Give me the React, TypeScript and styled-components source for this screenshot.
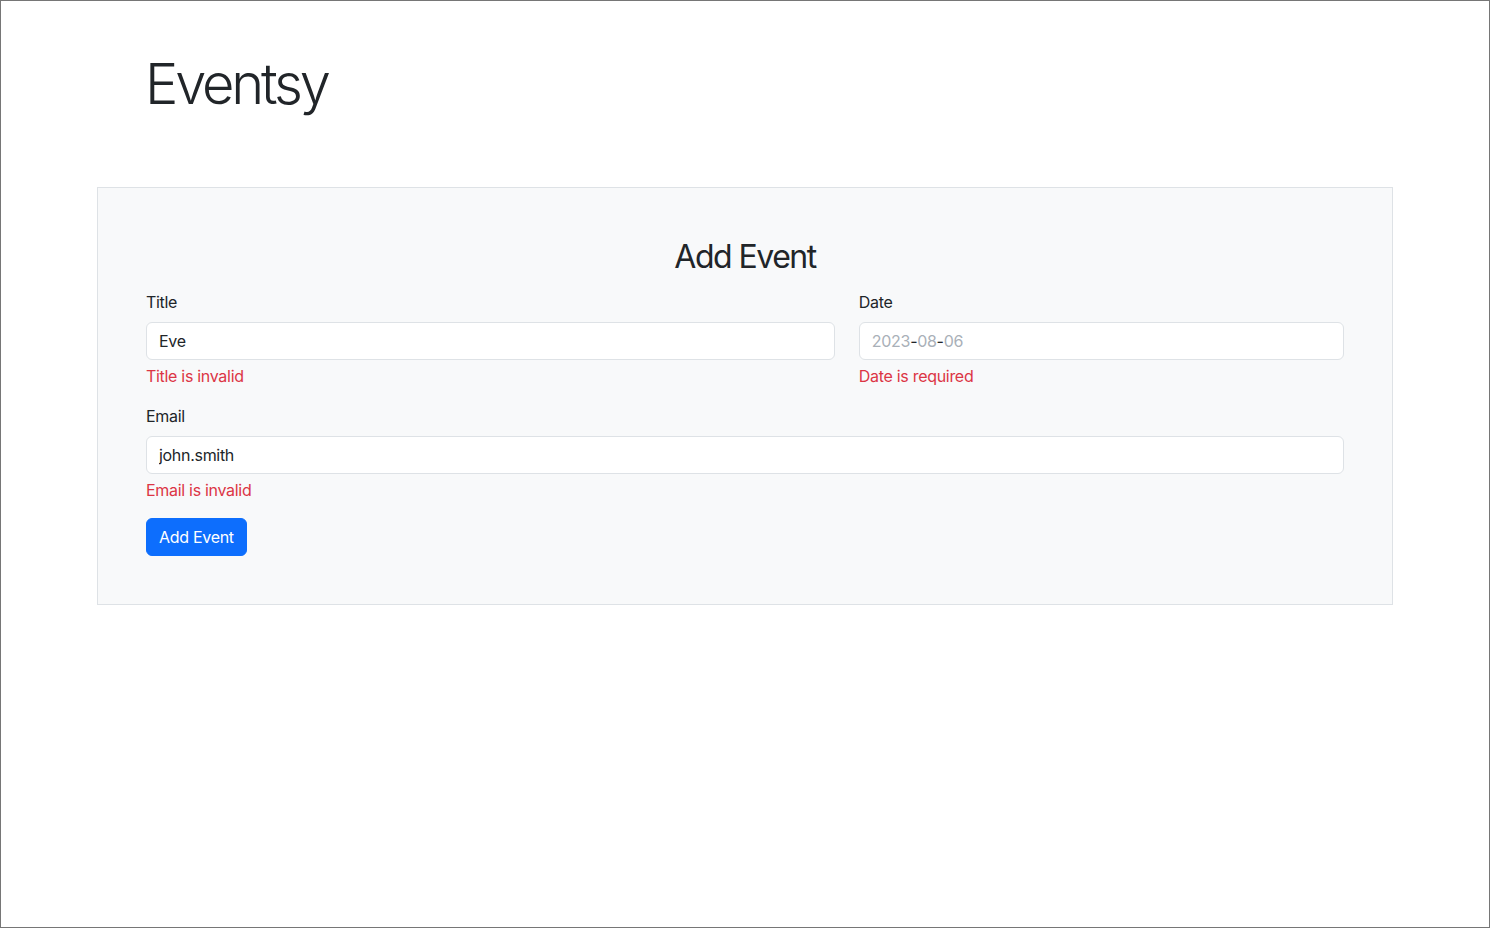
import React from 'react';
import styled, { createGlobalStyle } from 'styled-components';

const GlobalStyle = createGlobalStyle`
  * {
    box-sizing: border-box;
  }
  body {
    margin: 0;
    font-family: Inter, "Noto Sans", "Liberation Sans", sans-serif;
    font-size: 16px;
    line-height: 1.5;
    letter-spacing: -0.3px;
    color: #212529;
    background: #fff;
  }
`;

const Frame = styled.div`
  min-height: 100vh;
  border: 1px solid #767676;
`;

const Container = styled.div`
  max-width: 1320px;
  margin: 0 auto;
  padding: 0 12px;
`;

const Header = styled.header`
  padding: 50px 48px 61px;
`;

const Brand = styled.h1`
  margin: 0 0 8px;
  font-size: 56px;
  font-weight: 300;
  line-height: 1.2;
  letter-spacing: -3.2px;
`;

const Card = styled.form`
  background: #f8f9fa;
  border: 1px solid #dee2e6;
  padding: 48px;
`;

const CardTitle = styled.h2`
  margin: 0 0 13px;
  padding-top: 2px;
  text-align: center;
  font-size: 32px;
  font-weight: 400;
  line-height: 1.2;
  letter-spacing: -1.5px;
`;

const Row = styled.div`
  display: flex;
  margin: 0 -12px;
`;

const Col = styled.div<{ span: number }>`
  flex: 0 0 ${({ span }) => (span / 12) * 100}%;
  max-width: ${({ span }) => (span / 12) * 100}%;
  padding: 0 12px;
`;

const Field = styled.div`
  margin-bottom: 16px;
`;

const Label = styled.label`
  display: block;
  margin-bottom: 8px;
`;

const Input = styled.input`
  display: block;
  width: 100%;
  height: 38px;
  padding: 6px 12px;
  font: inherit;
  letter-spacing: inherit;
  color: #212529;
  background: #fff;
  border: 1px solid #dee2e6;
  border-radius: 6px;
  outline: none;
`;

const FakeDate = styled.div`
  display: flex;
  align-items: center;
  width: 100%;
  height: 38px;
  padding: 6px 12px;
  background: #fff;
  border: 1px solid #dee2e6;
  border-radius: 6px;
`;

const DatePart = styled.span<{ muted?: boolean }>`
  color: ${({ muted }) => (muted ? '#a9b0b8' : '#212529')};
`;

const Error = styled.div`
  margin-top: 4px;
  color: #dc3545;
`;

const Button = styled.button`
  display: inline-block;
  height: 38px;
  padding: 6px 12px;
  font: inherit;
  letter-spacing: inherit;
  color: #fff;
  background: #0d6efd;
  border: 1px solid #0d6efd;
  border-radius: 6px;
  cursor: pointer;
`;

const App = () => {
  return (
    <Frame>
      <GlobalStyle />
      <Container>
        <Header>
          <Brand>Eventsy</Brand>
        </Header>
        <Card onSubmit={(e) => e.preventDefault()}>
          <CardTitle>Add Event</CardTitle>
          <Row>
            <Col span={7}>
              <Field>
                <Label htmlFor="title">Title</Label>
                <Input id="title" defaultValue="Eve" />
                <Error>Title is invalid</Error>
              </Field>
            </Col>
            <Col span={5}>
              <Field>
                <Label>Date</Label>
                <FakeDate>
                  <DatePart muted>2023</DatePart>
                  <DatePart>-</DatePart>
                  <DatePart muted>08</DatePart>
                  <DatePart>-</DatePart>
                  <DatePart muted>06</DatePart>
                </FakeDate>
                <Error>Date is required</Error>
              </Field>
            </Col>
          </Row>
          <Field>
            <Label htmlFor="email">Email</Label>
            <Input id="email" defaultValue="john.smith" />
            <Error>Email is invalid</Error>
          </Field>
          <Button type="submit">Add Event</Button>
        </Card>
      </Container>
    </Frame>
  );
};

export default App;
